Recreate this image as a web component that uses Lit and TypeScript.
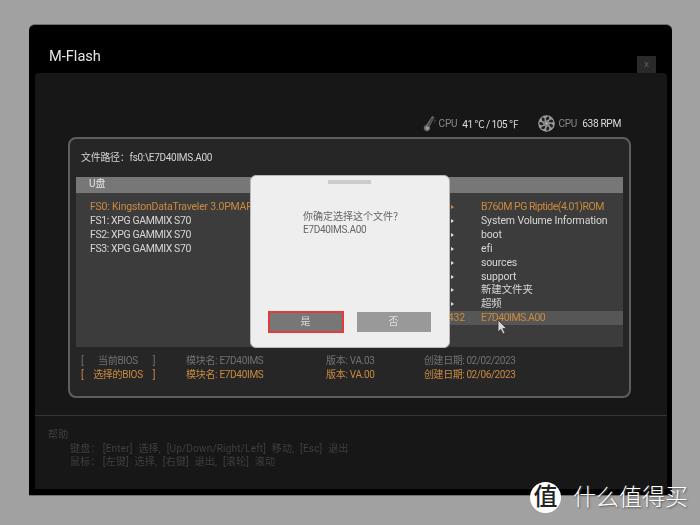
import { LitElement, html, css, svg } from "lit";
import { customElement } from "lit/decorators.js";

const drives = ["FS0: KingstonDataTraveler 3.0PMAP", "FS1: XPG GAMMIX S70", "FS2: XPG GAMMIX S70", "FS3: XPG GAMMIX S70"];
const files = ["B760M PG Riptide(4.01)ROM", "System Volume Information", "boot", "efi", "sources", "support", "新建文件夹", "超频", "E7D40IMS.A00"];

const fan = svg`<svg class="fan" width="17" height="17" viewBox="0 0 17 17">
  <circle cx="8.5" cy="8.5" r="8.3" fill="#9c9c9c"/>
  ${[0, 51, 103, 154, 206, 257, 309].map(a => svg`<path transform="rotate(${a} 8.5 8.5)" d="M8.7 5.6C7.3 4.4 7.6 2.2 10 1.4 12.4 2 11.4 4.8 8.7 5.6Z" fill="#222"/>`)}
  <circle cx="8.5" cy="8.5" r="2.7" fill="#7c7c7c"/>
  <circle cx="8.5" cy="8.5" r="1.2" fill="#b4b4b4"/>
</svg>`;

const thermo = svg`<svg width="14" height="17" viewBox="0 0 14 17">
  <path d="M9.2 1 11.4 2.2 6.7 11.4A3.2 3.2 0 1 1 3.2 9.9Z" fill="#6a6a6a"/>
  <circle cx="4.4" cy="13" r="1.7" fill="#a0a0a0"/>
  <path d="M5 11.6 9.6 3.2" stroke="#2a2a2a" stroke-width=".9"/>
  <path d="M11.6 5.4h1.4M10.8 7.2h1.4" stroke="#666" stroke-width=".7"/>
</svg>`;

@customElement("app-root")
export class AppRoot extends LitElement {
  static styles = css`
    :host {
      display: block;
      width: 700px;
      height: 525px;
      background: #a1a1a1;
      font-family: Roboto, "Noto Sans CJK SC", sans-serif;
      overflow: hidden;
      position: relative;
    }
    .page { box-sizing: border-box; height: 525px; padding: 24px 28px 29px 29px; }
    .window {
      box-sizing: border-box;
      height: 472px;
      background: #000;
      border-top: 1px solid #6e6e6e;
      border-bottom: 1px solid #6e6e6e;
      border-radius: 6px 6px 0 0;
      padding: 0 5px 6px 6px;
      display: flex;
      flex-direction: column;
      filter: blur(0.35px);
    }
    .head {
      height: 48px;
      flex: none;
      display: flex;
      justify-content: space-between;
      padding: 0 11px 0 14px;
    }
    .title { color: #e6e6e6; font-size: 14.6px; line-height: 62px; height: 48px; }
    .close {
      width: 19px;
      height: 17px;
      margin-top: 31px;
      background: #2a2a2a;
      color: #666;
      font-size: 8px;
      text-align: center;
      line-height: 17px;
      position: relative;
    }
    .panel {
      flex: 1;
      background: #171717;
      border-radius: 4px 4px 0 0;
      display: flex;
      flex-direction: column;
    }
    .sensors {
      height: 64px;
      flex: none;
      box-sizing: border-box;
      padding: 37px 46px 0 0;
      display: flex;
      justify-content: flex-end;
      align-items: center;
      color: #dcdcdc;
      font-size: 10.2px;
      letter-spacing: -0.35px;
    }
    .sensors .group { display: flex; align-items: center; height: 18px; }
    .sensors .group + .group { margin-left: 20px; }
    .sensors .cpu { color: #8a8a8a; margin: 0 5px 0 2px; font-size: 10px; letter-spacing: -.2px; }
    .sensors .group + .group .cpu { margin: 0 5px 0 3px; }
    .sensors .temp { letter-spacing: -.6px; }
    .sensors svg { flex: none; }

    .section {
      position: relative;
      box-sizing: border-box;
      flex: none;
      width: 563px;
      height: 261px;
      margin-left: 33px;
      background: #262626;
      border: 2px solid #5e5e5e;
      border-radius: 8px;
      padding: 0 6px;
    }
    .path { height: 38px; line-height: 37px; padding-left: 5px; color: #d4d4d4; font-size: 10px; letter-spacing: -.3px; }
    .bar { height: 16px; background: #777; color: #e4e4e4; font-size: 10px; line-height: 14px; padding-left: 13px; }
    .list {
      height: 154px;
      background: #3c3c3c;
      display: flex;
      box-sizing: border-box;
      padding-top: 7.4px;
      font-size: 10.5px;
      color: #d6d6d6;
      line-height: 13.85px;
    }
    .drives { width: 174px; flex: none; padding-left: 14px; white-space: nowrap; overflow: hidden; letter-spacing: -.4px; }
    .drives .on { letter-spacing: -.22px; }
    .files { flex: 1; letter-spacing: -.15px; }
    .row { display: flex; height: 13.85px; }
    .row .size { width: 217px; flex: none; text-align: right; position: relative; padding-right: 16px; box-sizing: border-box; }
    .mark {
      position: absolute;
      right: 27px;
      top: 5px;
      border-left: 3px solid #ddd;
      border-top: 2px solid transparent;
      border-bottom: 2px solid transparent;
    }
    .on { color: #cc8a3f; }
    .tight { letter-spacing: -.5px; }
    .mark.on { border-left-color: #cc8a3f; }
    .row.hl { background: #565656; }

    .info { padding: 7px 5px 0; font-size: 10px; line-height: 14px; color: #717171; letter-spacing: -.3px; }
    .info .line { display: flex; height: 14px; }
    .info .line.on { color: #c98a42; }
    .tag { width: 74px; flex: none; display: flex; justify-content: space-between; }
    .mod { width: 140px; flex: none; margin-left: 31px; }
    .ver { width: 98px; flex: none; }
    .date { letter-spacing: -.42px; }

    .dialog {
      position: absolute;
      left: 180px;
      top: 36px;
      width: 200px;
      height: 173px;
      box-sizing: border-box;
      background: #eeeeee;
      border: 1px solid #b8b8b8;
      border-radius: 6px;
      display: flex;
      flex-direction: column;
      align-items: center;
      padding-top: 4px;
    }
    .handle { width: 43px; height: 4px; background: #cbcbcb; flex: none; margin-right: 2px; }
    .msg { align-self: stretch; padding: 26px 0 0 52px; color: #666; font-size: 10px; flex: 1; }
    .msg div { height: 13.3px; line-height: 13.3px; }
    .msg .fname { letter-spacing: -.3px; }
    .btns { display: flex; gap: 13px; align-items: center; margin-bottom: 14px; padding-right: 2px; }
    .btn { box-sizing: border-box; text-align: center; font-size: 10px; color: #ddd; }
    .yes { width: 76px; height: 22px; line-height: 18px; background: #777; border: 2px solid #e23b3b; }
    .no { width: 74px; height: 20px; line-height: 20px; background: #999; }

    .cursor { position: absolute; left: 427px; top: 180px; }

    .help {
      flex: 1;
      margin-top: 17px;
      border-top: 1px solid #343434;
      padding: 12px 0 0 13px;
      color: #3f3f3f;
      font-size: 10px;
      letter-spacing: .2px;
      word-spacing: 3px;
    }
    .help div { height: 13.7px; line-height: 13.7px; white-space: nowrap; }
    .help .sub { padding-left: 22px; }

    .mark-wm {
      position: absolute;
      left: 530px;
      top: 482px;
      display: flex;
      align-items: center;
      gap: 12px;
      color: #fff;
    }
    .logo {
      width: 31px;
      height: 31px;
      border-radius: 50%;
      background: #fff;
      color: #222;
      font-size: 24px;
      line-height: 30px;
      text-align: center;
      font-weight: 500;
    }
    .wm-text { font-size: 23px; line-height: 31px; font-weight: 300; text-shadow: 1px 1px 2px #555; white-space: nowrap; }
  `;

  render() {
    return html`
      <div class="page">
        <div class="window">
          <div class="head">
            <div class="title">M-Flash</div>
            <div class="close">X</div>
          </div>
          <div class="panel">
            <div class="sensors">
              <div class="group">${thermo}<span class="cpu">CPU</span><span class="temp">41 ℃ / 105 ℉</span></div>
              <div class="group">${fan}<span class="cpu">CPU</span><span>638 RPM</span></div>
            </div>
            <div class="section">
              <div class="path">文件路径：fs0:\\E7D40IMS.A00</div>
              <div class="bar">U盘</div>
              <div class="list">
                <div class="drives">
                  ${drives.map((d, i) => html`<div class=${i === 0 ? "on" : ""}>${d}</div>`)}
                </div>
                <div class="files">
                  ${files.map((f, i) => html`
                    <div class="row ${i === 8 ? "hl" : ""}">
                      <div class="size ${i === 8 ? "on" : ""}">
                        ${i === 8 ? "432" : html`<span class="mark ${i === 0 ? "on" : ""}"></span>`}
                      </div>
                      <div class="${i === 0 || i === 8 ? "on tight" : ""}">${f}</div>
                    </div>`)}
                </div>
              </div>
              <div class="info">
                <div class="line">
                  <div class="tag"><span>[</span><span>当前BIOS</span><span>]</span></div>
                  <div class="mod">模块名: E7D40IMS</div>
                  <div class="ver">版本: VA.03</div>
                  <div class="date">创建日期: 02/02/2023</div>
                </div>
                <div class="line on">
                  <div class="tag"><span>[</span><span>选择的BIOS</span><span>]</span></div>
                  <div class="mod">模块名: E7D40IMS</div>
                  <div class="ver">版本: VA.00</div>
                  <div class="date">创建日期: 02/06/2023</div>
                </div>
              </div>
              <svg class="cursor" width="11" height="16" viewBox="0 0 11 16">
                <path d="M1 1V13L3.8 10.4 6 15 8 14 5.8 9.6H9.6Z" fill="#d8d8d8" stroke="#333" stroke-width=".8"/>
              </svg>
              <div class="dialog">
                <div class="handle"></div>
                <div class="msg"><div>你确定选择这个文件？</div><div class="fname">E7D40IMS.A00</div></div>
                <div class="btns">
                  <div class="btn yes">是</div>
                  <div class="btn no">否</div>
                </div>
              </div>
            </div>
            <div class="help">
              <div>帮助</div>
              <div class="sub">键盘：\u2009[Enter] 选择, [Up/Down/Right/Left] 移动, [Esc] 退出</div>
              <div class="sub">鼠标：\u2009[左键] 选择, [右键] 退出, [滚轮] 滚动</div>
            </div>
          </div>
        </div>
      </div>
      <div class="mark-wm">
        <div class="logo">值</div>
        <div class="wm-text">什么值得买</div>
      </div>
    `;
  }
}
